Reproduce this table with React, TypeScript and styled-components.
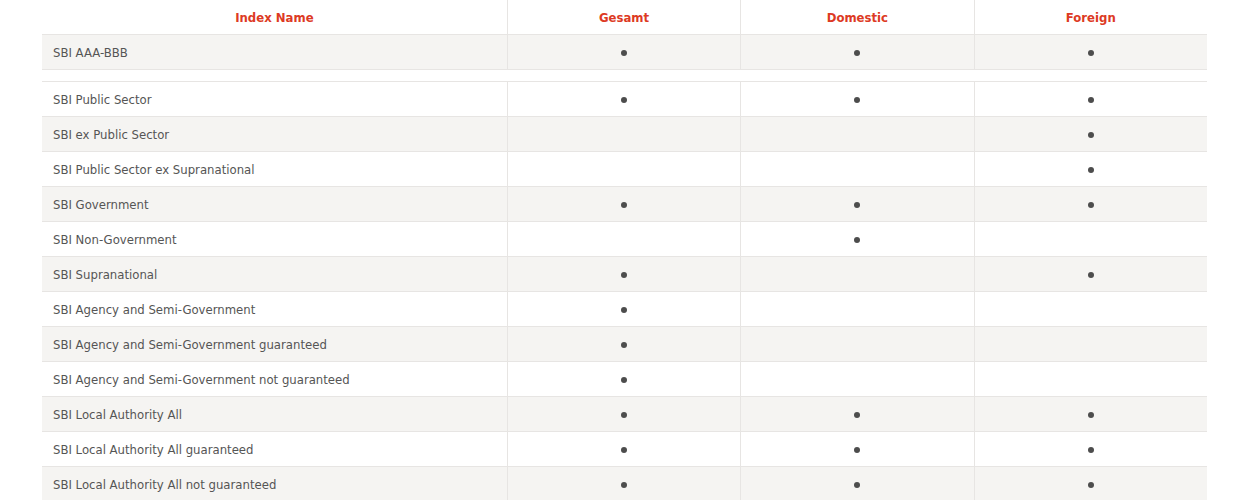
import styled, { createGlobalStyle } from "styled-components";

const colors = {
  red: "#dd3a24",
  text: "#555555",
  dot: "#4d4d4d",
  stripe: "#f5f4f2",
  line: "#e7e5e3",
};

type Row = { name: string; marks: [boolean, boolean, boolean] };

const topRows: Row[] = [{ name: "SBI AAA-BBB", marks: [true, true, true] }];

const sectorRows: Row[] = [
  { name: "SBI Public Sector", marks: [true, true, true] },
  { name: "SBI ex Public Sector", marks: [false, false, true] },
  { name: "SBI Public Sector ex Supranational", marks: [false, false, true] },
  { name: "SBI Government", marks: [true, true, true] },
  { name: "SBI Non-Government", marks: [false, true, false] },
  { name: "SBI Supranational", marks: [true, false, true] },
  { name: "SBI Agency and Semi-Government", marks: [true, false, false] },
  { name: "SBI Agency and Semi-Government guaranteed", marks: [true, false, false] },
  { name: "SBI Agency and Semi-Government not guaranteed", marks: [true, false, false] },
  { name: "SBI Local Authority All", marks: [true, true, true] },
  { name: "SBI Local Authority All guaranteed", marks: [true, true, true] },
  { name: "SBI Local Authority All not guaranteed", marks: [true, true, true] },
];

const GlobalStyle = createGlobalStyle`
  body {
    margin: 0;
    background: #ffffff;
    font-family: "DejaVu Sans Condensed", "Liberation Sans", sans-serif;
  }
`;

const Page = styled.div`
  padding: 0 43px 0 42px;
`;

const Table = styled.table`
  width: 100%;
  border-collapse: collapse;
  table-layout: fixed;
`;

const HeadCell = styled.th<{ $first?: boolean }>`
  width: ${(p) => (p.$first ? "40%" : "20%")};
  height: 34px;
  padding: 0;
  text-align: center;
  font-size: 13px;
  font-weight: bold;
  color: ${colors.red};
  border-bottom: 1px solid ${colors.line};
  border-left: ${(p) => (p.$first ? "none" : `1px solid ${colors.line}`)};
`;

const BodyRow = styled.tr<{ $striped: boolean }>`
  background: ${(p) => (p.$striped ? colors.stripe : "#ffffff")};
`;

const Cell = styled.td<{ $first?: boolean }>`
  height: 34px;
  padding: 0 0 0 ${(p) => (p.$first ? "11px" : "0")};
  text-align: ${(p) => (p.$first ? "left" : "center")};
  font-size: 13px;
  color: ${colors.text};
  border-bottom: 1px solid ${colors.line};
  border-left: ${(p) => (p.$first ? "none" : `1px solid ${colors.line}`)};
  white-space: nowrap;
`;

const Spacer = styled.td`
  height: 11px;
  padding: 0;
  border-bottom: 1px solid ${colors.line};
`;

const Dot = styled.span`
  display: inline-block;
  width: 6px;
  height: 6px;
  border-radius: 50%;
  background: ${colors.dot};
  vertical-align: middle;
`;

const renderRows = (rows: Row[], stripeEven: boolean) =>
  rows.map((r, i) => (
    <BodyRow key={r.name} $striped={(i % 2 === 0) === stripeEven}>
      <Cell $first>{r.name}</Cell>
      {r.marks.map((m, j) => (
        <Cell key={j}>{m ? <Dot /> : null}</Cell>
      ))}
    </BodyRow>
  ));

export default function App() {
  return (
    <Page>
      <GlobalStyle />
      <Table>
        <thead>
          <tr>
            <HeadCell $first>Index Name</HeadCell>
            <HeadCell>Gesamt</HeadCell>
            <HeadCell>Domestic</HeadCell>
            <HeadCell>Foreign</HeadCell>
          </tr>
        </thead>
        <tbody>
          {renderRows(topRows, true)}
          <tr>
            <Spacer colSpan={4} />
          </tr>
          {renderRows(sectorRows, false)}
        </tbody>
      </Table>
    </Page>
  );
}
